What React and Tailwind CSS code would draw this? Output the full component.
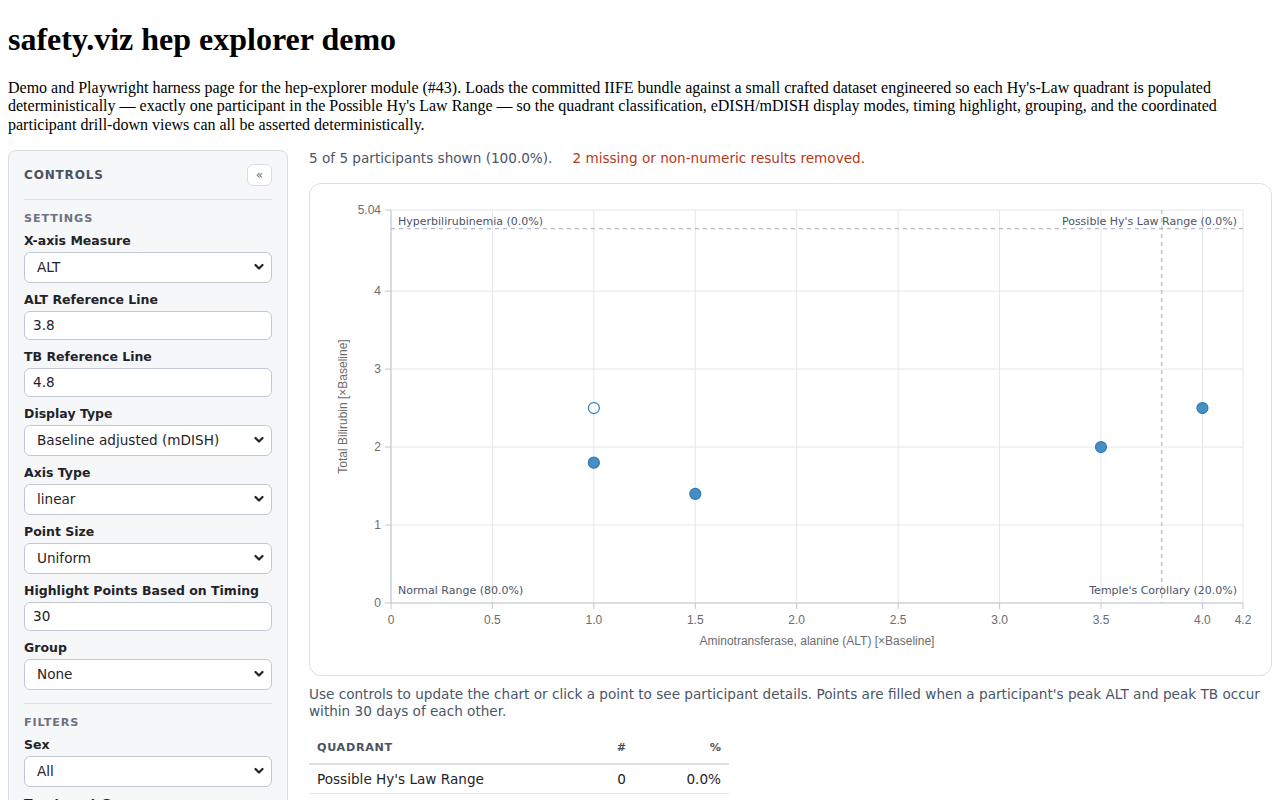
import { useState } from 'react';

const points = [
  { id: 'P01', x: 1.0, y: 2.5, filled: false },
  { id: 'P02', x: 1.0, y: 1.8, filled: true },
  { id: 'P03', x: 1.5, y: 1.4, filled: true },
  { id: 'P04', x: 3.5, y: 2.0, filled: true },
  { id: 'P05', x: 4.0, y: 2.5, filled: true },
];

const xTicks = [0, 0.5, 1.0, 1.5, 2.0, 2.5, 3.0, 3.5, 4.0, 4.2];
const yTicks = [0, 1, 2, 3, 4, 5.04];

const Chevron = () => (
  <svg width="10" height="8" viewBox="0 0 10 8" className="pointer-events-none absolute right-[8px] top-1/2 -translate-y-1/2">
    <polyline points="1.5,2 5,5.5 8.5,2" fill="none" stroke="#1f2328" strokeWidth="2.2" strokeLinecap="round" strokeLinejoin="round" />
  </svg>
);

const Field = ({ label, children }) => (
  <div className="flex flex-col">
    <label className="text-[12.5px] font-bold text-[#1f2328] leading-4 mb-[3px]">{label}</label>
    {children}
  </div>
);

const Select = ({ value, options }) => (
  <div className="relative">
    <select defaultValue={value}
      className="appearance-none w-full h-[31px] pl-3 pr-7 rounded-md border border-[#c3c9d2] bg-white text-[13.6px] text-[#1f2328]">
      {options.map(o => <option key={o}>{o}</option>)}
    </select>
    <Chevron />
  </div>
);

const Input = ({ value }) => (
  <input defaultValue={value}
    className="w-full h-[29px] px-2 rounded-md border border-[#c3c9d2] bg-white text-[13.6px] text-[#1f2328] outline-none" />
);

const SectionTitle = ({ children }) => (
  <p className="text-[11.2px] font-bold tracking-[0.08em] uppercase text-[#6b7280] leading-4 mb-[6px]">{children}</p>
);

const Chart = () => {
  const W = 960, H = 491;
  const L = 81, R = 933, T = 26, B = 419;
  const sx = v => L + (v / 4.2) * (R - L);
  const sy = v => B - (v / 5.04) * (B - T);

  return (
    <svg width={W} height={H} className="block" style={{ fontFamily: '"Liberation Sans", Arial, sans-serif' }}>
      {/* grid */}
      {xTicks.map(t => <line key={'gx' + t} x1={sx(t)} x2={sx(t)} y1={T} y2={B} stroke="#e3e6eb" />)}
      {yTicks.map(t => <line key={'gy' + t} x1={L} x2={R} y1={sy(t)} y2={sy(t)} stroke="#e3e6eb" />)}

      {/* axes */}
      <line x1={L} x2={L} y1={T} y2={B} stroke="#c2c6cd" />
      <line x1={L} x2={R} y1={B} y2={B} stroke="#c2c6cd" />
      {yTicks.map(t => (
        <g key={'ty' + t}>
          <line x1={L - 6} x2={L} y1={sy(t)} y2={sy(t)} stroke="#c2c6cd" />
          <text x={L - 10} y={sy(t) + 4} textAnchor="end" fontSize="12" fill="#6b6b6b">{t === 5.04 ? '5.04' : t}</text>
        </g>
      ))}
      {xTicks.map(t => (
        <g key={'tx' + t}>
          <line x1={sx(t)} x2={sx(t)} y1={B} y2={B + 6} stroke="#c2c6cd" />
          <text x={sx(t)} y={B + 21} textAnchor="middle" fontSize="12" fill="#6b6b6b">{t === 0 ? '0' : t.toFixed(1)}</text>
        </g>
      ))}

      {/* reference lines */}
      <line x1={L} x2={R} y1={sy(4.8)} y2={sy(4.8)} stroke="#a3abba" strokeDasharray="4 4" />
      <line x1={sx(3.8)} x2={sx(3.8)} y1={T} y2={B} stroke="#a3abba" strokeDasharray="4 4" />

      {/* quadrant labels */}
      <g fontSize="11" fill="#4a5568" style={{ fontFamily: '"DejaVu Sans", sans-serif' }}>
        <text x={L + 7} y={T + 15}>Hyperbilirubinemia (0.0%)</text>
        <text x={R - 6} y={T + 15} textAnchor="end">Possible Hy's Law Range (0.0%)</text>
        <text x={L + 7} y={B - 9}>Normal Range (80.0%)</text>
        <text x={R - 6} y={B - 9} textAnchor="end">Temple's Corollary (20.0%)</text>
      </g>

      {/* axis titles */}
      <text x={(L + R) / 2} y={B + 42} textAnchor="middle" fontSize="12" fill="#6b6b6b">Aminotransferase, alanine (ALT) [×Baseline]</text>
      <text transform={`translate(37 ${(T + B) / 2}) rotate(-90)`} textAnchor="middle" fontSize="12" fill="#6b6b6b">Total Bilirubin [×Baseline]</text>

      {/* participants */}
      {points.map(p => (
        <circle key={p.id} cx={sx(p.x)} cy={sy(p.y)} r="5.5"
          fill={p.filled ? '#3d88c2' : '#fff'} fillOpacity={p.filled ? 0.95 : 1}
          stroke="#2f7ab5" strokeWidth="1.2" />
      ))}
    </svg>
  );
};

export default function App() {
  const [collapsed, setCollapsed] = useState(false);

  return (
    <div className="px-2 text-black" style={{ fontFamily: '"Liberation Serif", "Times New Roman", serif' }}>
      <h1 className="mt-[21px] mb-[21px] text-[32px] font-bold leading-[1.15]">safety.viz hep explorer demo</h1>
      <p className="mb-4 text-base leading-[1.15]">
        Demo and Playwright harness page for the hep-explorer module (#43). Loads the committed IIFE bundle against a small crafted dataset engineered so each Hy's-Law quadrant is populated deterministically — exactly one participant in the Possible Hy's Law Range — so the quadrant classification, eDISH/mDISH display modes, timing highlight, grouping, and the coordinated participant drill-down views can all be asserted deterministically.
      </p>

      <div className="flex gap-[21px] items-start" style={{ fontFamily: '"DejaVu Sans", Verdana, sans-serif' }}>
        {/* Controls */}
        <aside className="w-[280px] shrink-0 rounded-lg border border-[#d9dde3] bg-[#f6f7f9] px-[15px] pt-[13px] pb-4">
          <div className="flex items-center justify-between pb-[13px] border-b border-[#dfe2e7]">
            <span className="text-[12px] font-bold tracking-[0.07em] text-[#4a5262]">CONTROLS</span>
            <button onClick={() => setCollapsed(c => !c)}
              className="w-[25px] h-[22px] rounded-md border border-[#d9dde3] bg-white text-xs text-[#6b7280] leading-none">«</button>
          </div>

          {!collapsed && (
            <>
              <div className="pt-[11px] pb-[13px] border-b border-[#dfe2e7]">
                <SectionTitle>Settings</SectionTitle>
                <div className="flex flex-col gap-[9px]">
                  <Field label="X-axis Measure"><Select value="ALT" options={['ALT', 'AST', 'ALP']} /></Field>
                  <Field label="ALT Reference Line"><Input value="3.8" /></Field>
                  <Field label="TB Reference Line"><Input value="4.8" /></Field>
                  <Field label="Display Type"><Select value="Baseline adjusted (mDISH)" options={['Baseline adjusted (mDISH)', 'Upper limit of normal adjusted (eDISH)']} /></Field>
                  <Field label="Axis Type"><Select value="linear" options={['linear', 'log']} /></Field>
                  <Field label="Point Size"><Select value="Uniform" options={['Uniform']} /></Field>
                  <Field label="Highlight Points Based on Timing"><Input value="30" /></Field>
                  <Field label="Group"><Select value="None" options={['None']} /></Field>
                </div>
              </div>
              <div className="pt-[11px]">
                <SectionTitle>Filters</SectionTitle>
                <div className="flex flex-col gap-[9px]">
                  <Field label="Sex"><Select value="All" options={['All', 'F', 'M']} /></Field>
                  <Field label="Treatment Group"><Select value="All" options={['All']} /></Field>
                </div>
              </div>
            </>
          )}
        </aside>

        {/* Main */}
        <main className="flex-1 min-w-0">
          <p className="text-[13.6px] leading-[17px] text-[#4a5568]">
            5 of 5 participants shown (100.0%).
            <span className="ml-5 text-[#b5391c]">2 missing or non-numeric results removed.</span>
          </p>

          <div className="mt-4 rounded-xl border border-[#dcdfe4] bg-white">
            <Chart />
          </div>

          <p className="mt-[10px] text-[13.6px] leading-[17px] text-[#4a5568]">
            Use controls to update the chart or click a point to see participant details. Points are filled when a participant's peak ALT and peak TB occur within 30 days of each other.
          </p>

          <table className="mt-[13px] w-[420px] text-[13.6px] text-[#1f2328] border-collapse">
            <thead>
              <tr className="border-b-2 border-[#dde0e5]">
                <th className="px-2 pt-[7px] pb-[6px] text-left text-[11.2px] font-bold tracking-[0.06em] text-[#4a5262]">QUADRANT</th>
                <th className="px-2 pt-[7px] pb-[6px] text-right text-[11.2px] font-bold text-[#4a5262] w-[90px]">#</th>
                <th className="px-2 pt-[7px] pb-[6px] text-right text-[11.2px] font-bold text-[#4a5262] w-[95px]">%</th>
              </tr>
            </thead>
            <tbody>
              {[["Possible Hy's Law Range", 0, '0.0%'], ['Hyperbilirubinemia', 0, '0.0%'], ["Temple's Corollary", 1, '20.0%'], ['Normal Range', 4, '80.0%']].map(r => (
                <tr key={r[0]} className="border-b border-[#e5e7eb]">
                  <td className="px-2 py-1">{r[0]}</td>
                  <td className="px-2 py-1 text-right">{r[1]}</td>
                  <td className="px-2 py-1 text-right">{r[2]}</td>
                </tr>
              ))}
            </tbody>
          </table>
        </main>
      </div>
    </div>
  );
}
